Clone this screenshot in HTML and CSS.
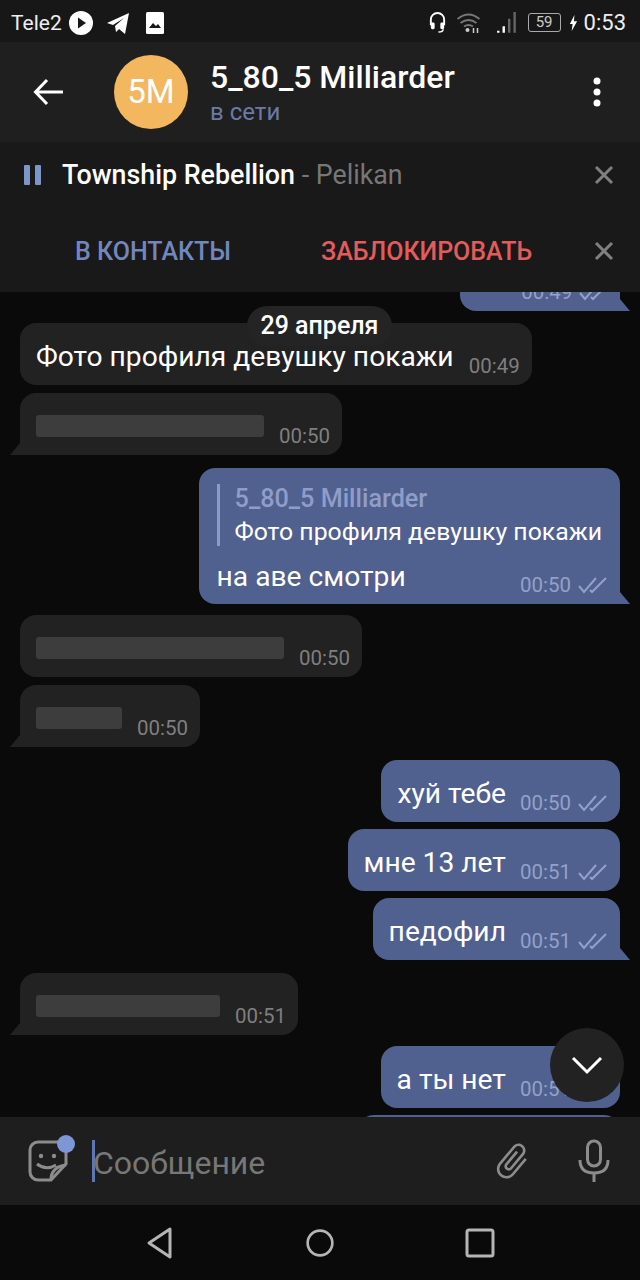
FILE: index.html
```html
<!DOCTYPE html>
<html lang="ru">
<head>
    <meta charset="UTF-8">
    <title>5_80_5 Milliarder</title>
    <link rel="stylesheet" href="styles.css">
</head>
<body>
    <div class="screen">
        <div class="status-bar">
            <span class="carrier">Tele2</span>
            <svg class="st-play" viewBox="0 0 24 24"><circle cx="12" cy="12" r="12" fill="#fff"/><path d="M9 6.5l8 5.5-8 5.5z" fill="#171717"/></svg>
            <svg class="st-tg" viewBox="0 0 24 24"><path d="M1 12L23 2l-4 21-6-5-3 3-1-6 9-8-11 7z" fill="#fff"/></svg>
            <svg class="st-pic" viewBox="0 0 20 24"><rect x="1" y="1" width="18" height="22" rx="1.5" fill="#fff"/><path d="M4 17l4-5 3 3 2-2 3 4z" fill="#171717"/></svg>
            <span class="status-right">
                <svg class="st-head" viewBox="0 0 20 24"><path d="M3 15V9a7 7 0 0 1 14 0v6" fill="none" stroke="#fff" stroke-width="2"/><rect x="3" y="12" width="4" height="7" rx="1.5" fill="#fff"/><rect x="13" y="12" width="4" height="7" rx="1.5" fill="#fff"/><path d="M16 19q0 3-5 3" fill="none" stroke="#fff" stroke-width="1.5"/></svg>
                <svg class="st-wifi" viewBox="0 0 24 22"><path d="M1 7q11-9 22 0M4 11q8-6 16 0M7.500 14.500q4.500-3 9 0" fill="none" stroke="#777" stroke-width="1.800"/><circle cx="11" cy="18" r="2" fill="#ccc"/><path d="M17 16v5M21 16v5" stroke="#ccc" stroke-width="1.500"/></svg>
                <svg class="st-signal" viewBox="0 0 20 22"><path d="M2 20v-2M7 20v-6" stroke="#fff" stroke-width="2.200"/><path d="M12 20V7M17 20V1" stroke="#666" stroke-width="2.200"/></svg>
                <span class="battery">59</span>
                <svg class="st-bolt" viewBox="0 0 10 18"><path d="M6 0L1 10h3l-1 8 6-11H5.500z" fill="#fff"/></svg>
                <span class="clock">0:53</span>
            </span>
        </div>

        <div class="top-bar">
            <svg class="back" viewBox="0 0 32 28"><path d="M30 14H3M14 2L2.500 14 14 26" fill="none" stroke="#fff" stroke-width="3"/></svg>
            <div class="avatar">5M</div>
            <div class="peer">
                <div class="peer-name">5_80_5 Milliarder</div>
                <div class="peer-status">в сети</div>
            </div>
            <svg class="dots" viewBox="0 0 10 30"><circle cx="5" cy="4" r="3.500"/><circle cx="5" cy="15" r="3.500"/><circle cx="5" cy="26" r="3.500"/></svg>
        </div>

        <div class="player">
            <span class="pause"><i></i><i></i></span>
            <span class="track">Township Rebellion</span>
            <span class="artist">&nbsp;- Pelikan</span>
            <svg class="close" viewBox="0 0 20 20"><path d="M2 2l16 16M18 2L2 18"/></svg>
        </div>

        <div class="actions">
            <span class="act-add">В КОНТАКТЫ</span>
            <span class="act-block">ЗАБЛОКИРОВАТЬ</span>
            <svg class="close" viewBox="0 0 20 20"><path d="M2 2l16 16M18 2L2 18"/></svg>
        </div>

        <div class="chat">
            <div class="date-pill">29 апреля</div>
            <div class="feed">
                <div class="msg out tail first"><span class="hidden-text">ок</span><span class="meta">00:49 <svg class="ticks" viewBox="0 0 30 18"><path d="M1 10l5 6L18 2M12 14l2 2L28 2"/></svg></span></div>

                <div class="msg in gap-xl"><span class="text">Фото профиля девушку покажи</span><span class="meta">00:49</span></div>
                <div class="msg in tail gap-n"><span class="mask mask-a"></span><span class="meta">00:50</span></div>

                <div class="msg out tail gap-l reply-msg">
                    <div class="reply">
                        <div class="reply-name">5_80_5 Milliarder</div>
                        <div class="reply-text">Фото профиля девушку покажи</div>
                    </div>
                    <div class="reply-body"><span class="text">на аве смотри</span><span class="meta">00:50 <svg class="ticks" viewBox="0 0 30 18"><path d="M1 10l5 6L18 2M12 14l2 2L28 2"/></svg></span></div>
                </div>

                <div class="msg in gap-m"><span class="mask mask-b"></span><span class="meta">00:50</span></div>
                <div class="msg in tail gap-n"><span class="mask mask-c"></span><span class="meta">00:50</span></div>

                <div class="msg out gap-l"><span class="text">хуй тебе</span><span class="meta">00:50 <svg class="ticks" viewBox="0 0 30 18"><path d="M1 10l5 6L18 2M12 14l2 2L28 2"/></svg></span></div>
                <div class="msg out gap-s"><span class="text">мне 13 лет</span><span class="meta">00:51 <svg class="ticks" viewBox="0 0 30 18"><path d="M1 10l5 6L18 2M12 14l2 2L28 2"/></svg></span></div>
                <div class="msg out tail gap-s"><span class="text">педофил</span><span class="meta">00:51 <svg class="ticks" viewBox="0 0 30 18"><path d="M1 10l5 6L18 2M12 14l2 2L28 2"/></svg></span></div>

                <div class="msg in tail gap-l"><span class="mask mask-d"></span><span class="meta">00:51</span></div>

                <div class="msg out gap-m"><span class="text">а ты нет</span><span class="meta">00:51 <svg class="ticks" viewBox="0 0 30 18"><path d="M1 10l5 6L18 2M12 14l2 2L28 2"/></svg></span></div>
                <div class="msg out last gap-s"></div>
            </div>
            <div class="scroll-down">
                <svg viewBox="0 0 32 20"><path d="M2 3l14 14L30 3" fill="none" stroke="#fff" stroke-width="3"/></svg>
            </div>
        </div>

        <div class="composer">
            <span class="sticker">
                <svg viewBox="0 0 42 44"><path d="M11 3h20a8 8 0 0 1 8 8v14L24 41H11a8 8 0 0 1-8-8V11a8 8 0 0 1 8-8z" fill="none" stroke="#8c8c8c" stroke-width="3"/><circle cx="14" cy="17" r="2.200" fill="#8c8c8c"/><circle cx="27" cy="17" r="2.200" fill="#8c8c8c"/><path d="M10 25q9 7 19 1M24 41q0-13 15-15" fill="none" stroke="#8c8c8c" stroke-width="3"/></svg>
                <i class="sticker-dot"></i>
            </span>
            <span class="caret"></span>
            <span class="placeholder">Сообщение</span>
            <svg class="clip" viewBox="0 0 24 24"><path transform="rotate(40 12 12)" fill="#8c8c8c" d="M16.500 6v11.500c0 2.210-1.790 4-4 4s-4-1.790-4-4V5c0-1.380 1.120-2.500 2.500-2.500s2.500 1.120 2.500 2.500v10.500c0 .550-.450 1-1 1s-1-.450-1-1V6H10v9.500c0 1.380 1.120 2.500 2.500 2.500s2.500-1.120 2.500-2.500V5c0-2.210-1.790-4-4-4S7 2.790 7 5v12.500c0 3.040 2.460 5.500 5.500 5.500s5.500-2.460 5.500-5.500V6h-1.500z"/></svg>
            <svg class="mic" viewBox="0 0 32 44"><rect x="9.500" y="2" width="13" height="25" rx="6.500" fill="none" stroke="#8c8c8c" stroke-width="3"/><path d="M2 21q0 13 14 13t14-13M16 34v9" fill="none" stroke="#8c8c8c" stroke-width="3"/></svg>
        </div>

        <div class="nav-bar">
            <svg class="nav-icon" viewBox="0 0 30 34"><path d="M25 3L4 17l21 14z" fill="none" stroke="#b5b5b5" stroke-width="3" stroke-linejoin="round"/></svg>
            <svg class="nav-icon" viewBox="0 0 34 34"><circle cx="17" cy="17" r="14" fill="none" stroke="#b5b5b5" stroke-width="3"/></svg>
            <svg class="nav-icon" viewBox="0 0 30 30"><rect x="2" y="2" width="26" height="26" rx="2" fill="none" stroke="#b5b5b5" stroke-width="3"/></svg>
        </div>
    </div>
</body>
</html>
```

FILE: styles.css
```css
* {
    box-sizing: border-box;
}
body {
    margin: 0;
    background-color: #0a0a0a;
    font-family: Roboto, "Liberation Sans", sans-serif;
    color: #fff;
}
.screen {
    width: 640px;
    height: 1280px;
    display: flex;
    flex-direction: column;
    overflow: hidden;
}

/* status bar */
.status-bar {
    height: 42px;
    flex: none;
    display: flex;
    align-items: center;
    padding: 3px 14px 0 11px;
    background-color: #171717;
}
.carrier {
    font-size: 21px;
    color: #eee;
}
.st-play {
    width: 24px;
    height: 24px;
    margin-left: 7px;
}
.st-tg {
    width: 24px;
    height: 24px;
    margin-left: 13px;
}
.st-pic {
    width: 20px;
    height: 24px;
    margin-left: 15px;
}
.status-right {
    margin-left: auto;
    display: flex;
    align-items: center;
}
.st-head {
    width: 19px;
    height: 23px;
}
.st-wifi {
    width: 25px;
    height: 22px;
    margin-left: 9px;
}
.st-signal {
    width: 22px;
    height: 24px;
    margin-left: 15px;
}
.battery {
    width: 33px;
    height: 19px;
    margin-left: 10px;
    border: 1px solid #aaa;
    border-radius: 3px;
    font-size: 15px;
    line-height: 17px;
    text-align: center;
    color: #ccc;
}
.st-bolt {
    width: 9px;
    height: 18px;
    margin-left: 8px;
}
.clock {
    margin-left: 6px;
    font-size: 22px;
    color: #eee;
}

/* header */
.top-bar {
    height: 100px;
    flex: none;
    display: flex;
    align-items: center;
    background-color: #1f1f1f;
}
.back {
    width: 32px;
    height: 28px;
    margin-left: 33px;
}
.avatar {
    width: 74px;
    height: 74px;
    margin-left: 49px;
    border-radius: 50%;
    background-color: #f2b75f;
    font-size: 33px;
    line-height: 74px;
    text-align: center;
}
.peer {
    margin-left: 22px;
    flex: 1;
}
.peer-name {
    font-size: 32px;
    font-weight: 500;
    line-height: 38px;
}
.peer-status {
    margin-top: 1px;
    font-size: 24px;
    line-height: 30px;
    color: #6a7ba6;
}
.dots {
    width: 10px;
    height: 30px;
    margin-right: 38px;
    fill: #fff;
}

/* player and action strip */
.player {
    height: 66px;
    flex: none;
    display: flex;
    align-items: center;
    padding-left: 24px;
    background-color: #191919;
    font-size: 26.800px;
}
.pause {
    display: flex;
    gap: 5px;
    margin-right: 21px;
}
.pause i {
    width: 6px;
    height: 20px;
    border-radius: 1px;
    background-color: #7d96c9;
}
.track {
    font-weight: 500;
}
.artist {
    color: #777;
}
.close {
    width: 20px;
    height: 20px;
    margin-left: auto;
    margin-right: 26px;
    fill: none;
    stroke: #808080;
    stroke-width: 3;
}
.actions {
    height: 84px;
    flex: none;
    display: flex;
    align-items: center;
    padding-top: 2px;
    background-color: #191919;
    font-size: 25px;
    font-weight: 500;
}
.act-add {
    margin-left: 75px;
    color: #7287bd;
}
.act-block {
    margin-left: 90px;
    color: #e25c5c;
}

/* messages */
.chat {
    position: relative;
    flex: 1;
    overflow: hidden;
    background-color: #0a0a0a;
}
.feed {
    display: flex;
    flex-direction: column;
    margin-top: -43px;
}
.date-pill {
    position: absolute;
    z-index: 2;
    top: 14px;
    left: 247px;
    width: 145px;
    height: 40px;
    border-radius: 20px;
    background-color: #242424;
    font-size: 25px;
    font-weight: 500;
    line-height: 40px;
    text-align: center;
}
.msg {
    position: relative;
    display: flex;
    align-items: center;
    height: 62px;
    padding: 4px 16px 0;
    border-radius: 16px;
    font-size: 28.200px;
}
.msg.in {
    align-self: flex-start;
    margin-left: 20px;
    background-color: #222222;
}
.msg.out {
    align-self: flex-end;
    margin-right: 20px;
    background-color: #50608f;
}
.msg.tail.in {
    border-bottom-left-radius: 0;
}
.msg.tail.out {
    border-bottom-right-radius: 0;
}
.msg.tail::after {
    content: "";
    position: absolute;
    bottom: 0;
    width: 10px;
    height: 12px;
}
.msg.tail.in::after {
    left: -10px;
    background-color: #222222;
    clip-path: polygon(100% 0, 100% 100%, 0 100%);
}
.msg.tail.out::after {
    right: -10px;
    background-color: #50608f;
    clip-path: polygon(0 0, 100% 100%, 0 100%);
}
.gap-s {
    margin-top: 7px;
}
.gap-n {
    margin-top: 8px;
}
.gap-m {
    margin-top: 11px;
}
.gap-xl {
    margin-top: 12px;
}
.gap-l {
    margin-top: 13px;
}
.first {
    width: 160px;
}
.hidden-text {
    visibility: hidden;
}
.last {
    width: 262px;
}
.meta {
    display: flex;
    align-items: center;
    gap: 7px;
    margin: 20px -4px 0 15px;
    font-size: 20.500px;
    white-space: nowrap;
    color: #7f7f7f;
}
.out .meta {
    color: #93a1c9;
    margin-left: 14px;
}
.ticks {
    width: 30px;
    height: 18px;
    fill: none;
    stroke: #93a1c9;
    stroke-width: 2;
}

/* redaction bars keep the width of the masked message */
.mask {
    display: block;
    height: 22px;
    border-radius: 3px;
    background-color: #3d3d3d;
}
.mask-a {
    width: 228px;
}
.mask-b {
    width: 248px;
}
.mask-c {
    width: 86px;
}
.mask-d {
    width: 184px;
}

.msg.reply-msg {
    display: block;
    height: 136px;
    padding: 16px 18px 0 18px;
}
.reply {
    height: 62px;
    padding-left: 15px;
    border-left: 3px solid #8c9ac4;
}
.reply-name {
    font-size: 25.200px;
    font-weight: 500;
    line-height: 30px;
    color: #8f9dc8;
}
.reply-text {
    font-size: 24.800px;
    line-height: 36px;
}
.reply-body {
    display: flex;
    align-items: center;
    justify-content: space-between;
    height: 40px;
    margin-top: 10px;
}
.out .reply-body .meta {
    margin: 18px -6px 0 0;
}
.scroll-down {
    position: absolute;
    right: 16px;
    top: 736px;
    width: 74px;
    height: 74px;
    display: flex;
    align-items: center;
    justify-content: center;
    border-radius: 50%;
    background-color: #222222;
}
.scroll-down svg {
    width: 32px;
    height: 20px;
}

/* bottom input */
.composer {
    height: 88px;
    flex: none;
    display: flex;
    align-items: center;
    background-color: #1e1e1e;
}
.sticker {
    position: relative;
    width: 42px;
    height: 44px;
    margin-left: 27px;
}
.sticker svg {
    width: 42px;
    height: 44px;
}
.sticker-dot {
    position: absolute;
    top: -4px;
    right: -6px;
    width: 18px;
    height: 18px;
    border-radius: 50%;
    background-color: #7d96d6;
}
.caret {
    width: 3px;
    height: 42px;
    margin-left: 23px;
    background-color: #5f76b5;
}
.placeholder {
    margin-left: -2px;
    padding-top: 3px;
    font-size: 32px;
    color: #777;
}
.clip {
    width: 42px;
    height: 42px;
    margin-left: auto;
}
.mic {
    width: 32px;
    height: 44px;
    margin-left: 45px;
    margin-right: 30px;
}

/* android nav */
.nav-bar {
    height: 75px;
    flex: none;
    display: flex;
    align-items: center;
    justify-content: center;
    gap: 130px;
    background-color: #0a0a0a;
}
.nav-icon {
    width: 30px;
    height: 34px;
}
```
